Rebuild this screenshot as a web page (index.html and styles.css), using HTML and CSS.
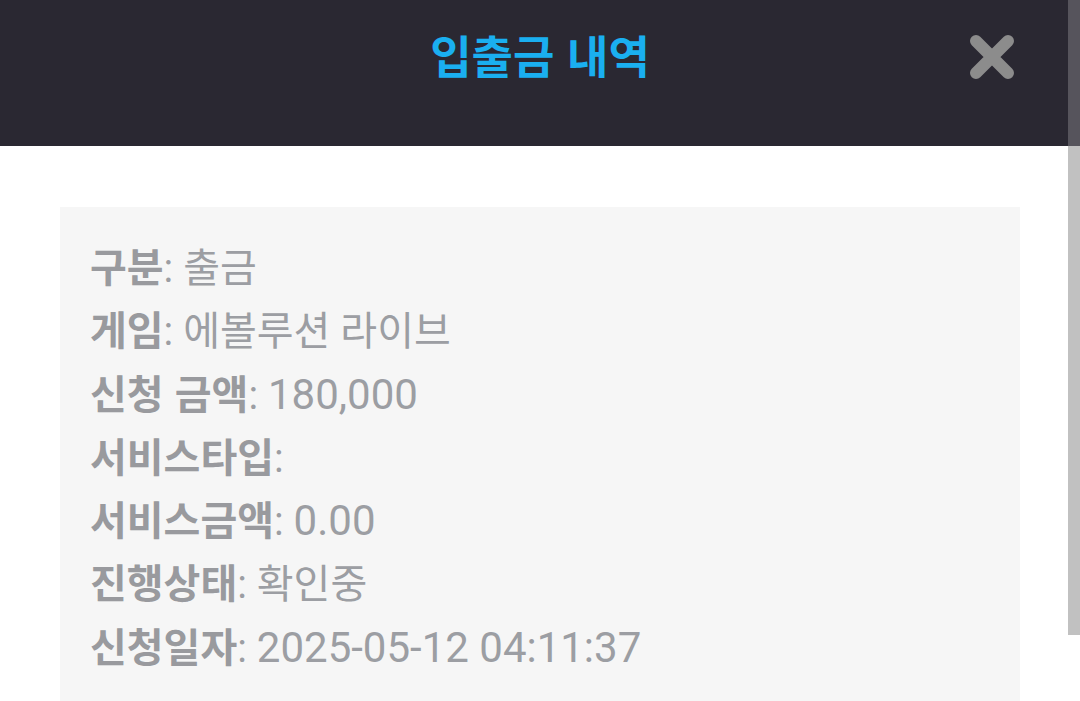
FILE: index.html
```html
<!DOCTYPE html>
<html lang="ko">
<head>
<meta charset="utf-8">
<link rel="stylesheet" href="styles.css">
</head>
<body>
<header class="header">
  <h1 class="title">입출금 내역</h1>
  <button class="close" aria-label="close">
    <svg viewBox="0 0 48 48" width="48" height="48">
      <path d="M8 8 L40 40 M40 8 L8 40" stroke="#8c8c8c" stroke-width="12" stroke-linecap="round"/>
    </svg>
  </button>
</header>
<main class="content">
  <section class="card">
    <div class="row"><span class="label">구분</span>: 출금</div>
    <div class="row"><span class="label">게임</span>: 에볼루션 라이브</div>
    <div class="row"><span class="label">신청 금액</span>: <span class="num">180,000</span></div>
    <div class="row"><span class="label">서비스타입</span>:</div>
    <div class="row"><span class="label">서비스금액</span>: <span class="num">0.00</span></div>
    <div class="row"><span class="label">진행상태</span>: 확인중</div>
    <div class="row"><span class="label">신청일자</span>: <span class="num">2025-05-12 04:11:37</span></div>
  </section>
</main>
<div class="scrollbar"><div class="scroll-top"></div><div class="scroll-thumb"></div></div>
</body>
</html>
```
FILE: styles.css
```css
html, body {
  margin: 0;
  padding: 0;
  background: #ffffff;
  overflow: hidden;
}
body {
  font-family: Roboto, "Noto Sans CJK KR", sans-serif;
  width: 1080px;
  height: 701px;
  position: relative;
}
.header {
  height: 146px;
  background: #2a2832;
  display: flex;
  align-items: flex-start;
  justify-content: center;
  position: relative;
}
.title {
  margin: 0;
  margin-top: 24px;
  font-family: "Noto Sans CJK KR", sans-serif;
  font-weight: 700;
  font-size: 45px;
  line-height: 62px;
  color: #1aaff0;
  letter-spacing: 0;
}
.close {
  position: absolute;
  top: 33px;
  right: 64px;
  width: 48px;
  height: 48px;
  padding: 0;
  border: 0;
  background: none;
}
.close svg { display: block; }
.content {
  padding: 61px 60px 0 60px;
}
.card {
  background: #f6f6f6;
  padding: 27px 30px 0 30px;
  height: 467px;
  overflow: hidden;
}
.row {
  font-size: 40px;
  height: 63.3px;
  line-height: 63.3px;
  color: #9c9ea3;
  white-space: nowrap;
  overflow: hidden;
}
.num {
  font-size: 42px;
}
.label {
  font-family: "Noto Sans CJK KR", sans-serif;
  font-weight: 700;
  color: #999a9e;
}
.scrollbar {
  position: absolute;
  top: 0;
  right: 0;
  width: 12px;
  height: 701px;
}
.scroll-top {
  height: 146px;
  background: #56545c;
}
.scroll-thumb {
  height: 489px;
  background: #c1c1c1;
}
```
